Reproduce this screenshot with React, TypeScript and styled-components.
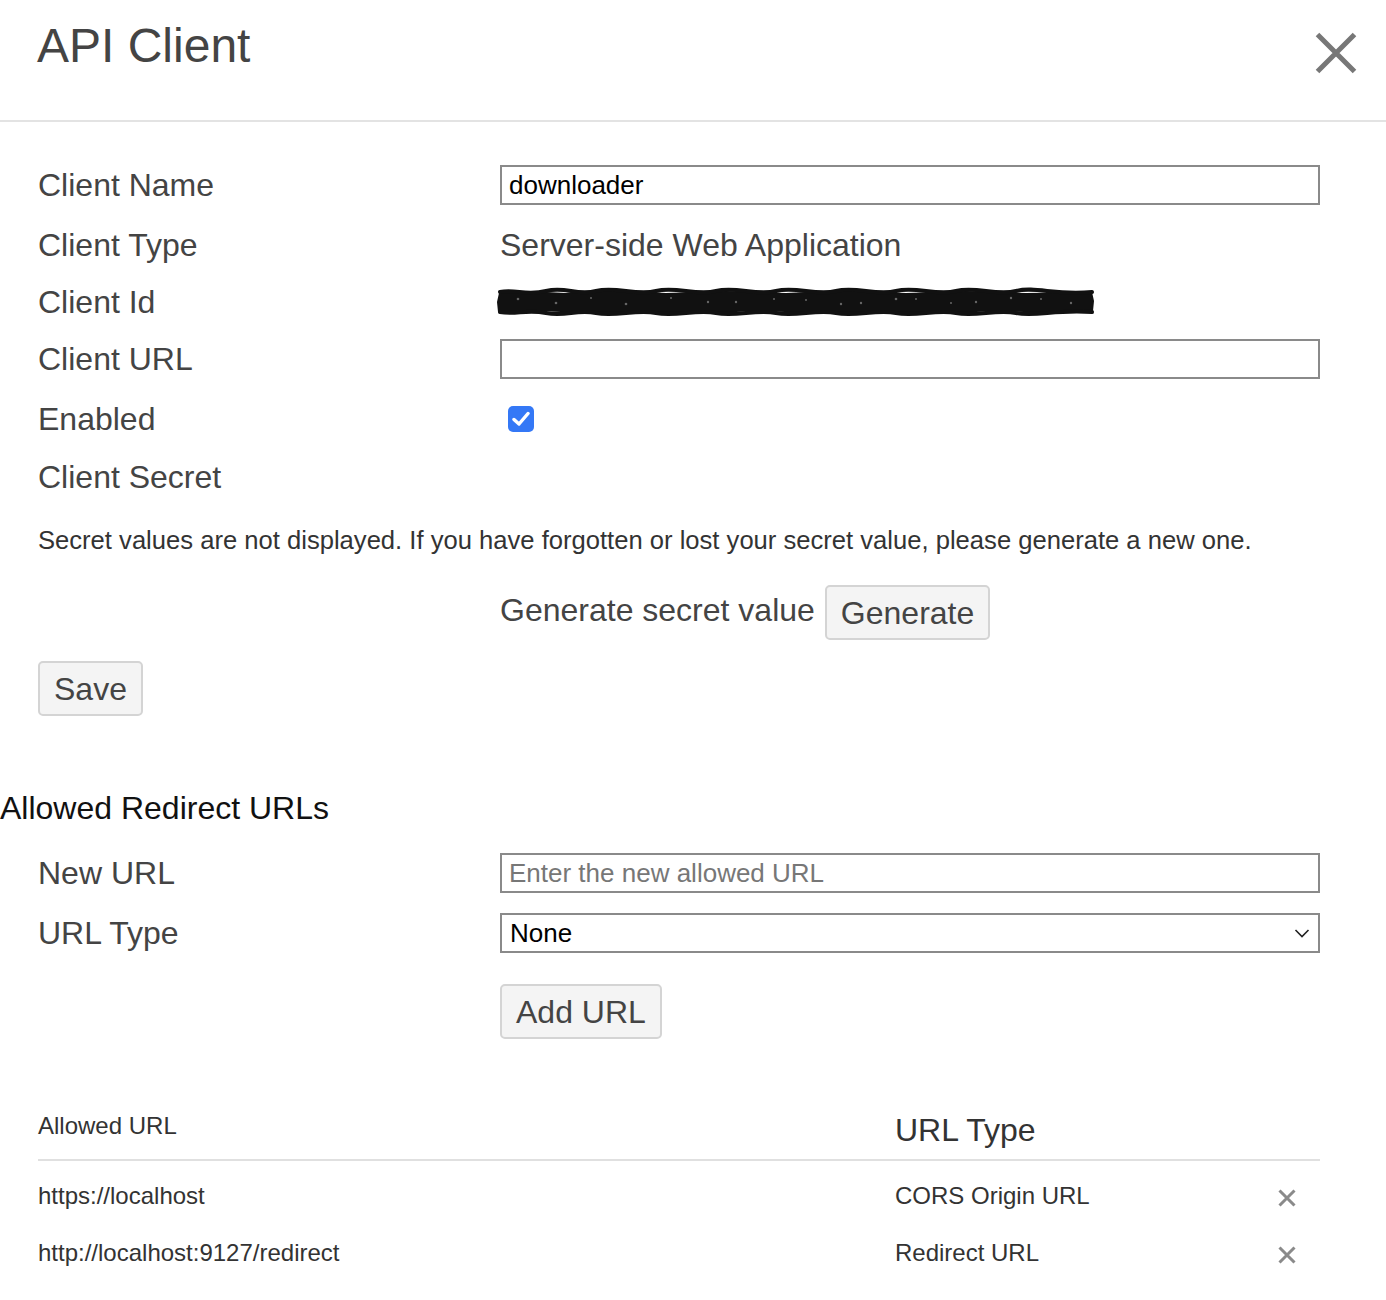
import React from "react";
import styled, { createGlobalStyle } from "styled-components";

const Global = createGlobalStyle`
  html, body { margin: 0; padding: 0; background: #fff; }
  body { font-family: "Liberation Sans", Arial, sans-serif; color: #444; }
  * { box-sizing: border-box; }
`;

const Page = styled.div`
  width: 1386px;
  min-height: 1300px;
  background: #fff;
`;

const Header = styled.header`
  display: flex;
  justify-content: space-between;
  align-items: flex-start;
  height: 122px;
  padding: 18px 29px 0 37px;
  border-bottom: 2px solid #e3e3e3;
`;

const Title = styled.h1`
  margin: 0;
  font-size: 48px;
  line-height: 56px;
  font-weight: 400;
  color: #444;
`;

const CloseButton = styled.button`
  width: 42px;
  height: 42px;
  margin-top: 14px;
  padding: 0;
  border: none;
  background: transparent;
  cursor: pointer;
  display: flex;
`;

const Body = styled.div`
  padding: 33px 66px 0 38px;
`;

const FormRow = styled.div<{ $h?: number }>`
  display: grid;
  grid-template-columns: 462px 1fr;
  align-items: center;
  height: ${(p) => p.$h ?? 58}px;
`;

const Label = styled.div`
  font-size: 32px;
  line-height: 40px;
  color: #444;
`;

const Value = styled.div`
  font-size: 32px;
  line-height: 40px;
  color: #444;
`;

const TextInput = styled.input`
  width: 100%;
  height: 40px;
  border: 2px solid #8a8a8a;
  padding: 0 7px;
  font-family: "Liberation Sans", Arial, sans-serif;
  font-size: 26px;
  color: #000;
  background: #fff;
  outline: none;
  &::placeholder { color: #777; }
`;

const SelectWrap = styled.div`
  position: relative;
  width: 100%;
`;

const Select = styled.select`
  width: 100%;
  height: 40px;
  border: 2px solid #8a8a8a;
  border-radius: 0;
  padding: 0 8px;
  font-family: "Liberation Sans", Arial, sans-serif;
  font-size: 26px;
  color: #000;
  background: #fff;
  appearance: none;
  outline: none;
`;

const Chevron = styled.svg`
  position: absolute;
  right: 10px;
  top: 13px;
  pointer-events: none;
`;

const Check = styled.div`
  width: 26px;
  height: 26px;
  margin-left: 8px;
  border-radius: 5px;
  background: #3478f6;
  display: flex;
  align-items: center;
  justify-content: center;
`;

const RedactionBox = styled.div`
  display: flex;
  margin-left: -4px;
`;

const Note = styled.p`
  margin: 19px 0 0;
  font-size: 25.6px;
  line-height: 32px;
  color: #333;
`;

const GenerateRow = styled.div`
  display: flex;
  align-items: center;
  gap: 10px;
  margin: 29px 0 0 462px;
`;

const GenerateLabel = styled(Value)`
  margin-top: -5px;
`;

const Button = styled.button<{ $mt?: number; $ml?: number }>`
  height: 55px;
  padding: 0 14px;
  margin-top: ${(p) => p.$mt ?? 0}px;
  margin-left: ${(p) => p.$ml ?? 0}px;
  border: 2px solid #d4d4d4;
  border-radius: 5px;
  background: #f4f4f4;
  color: #444;
  font-family: "Liberation Sans", Arial, sans-serif;
  font-size: 32px;
  line-height: 40px;
  cursor: pointer;
  display: block;
`;

const SectionTitle = styled.h2`
  margin: 72px 0 15px -38px;
  font-size: 32px;
  line-height: 40px;
  font-weight: 400;
  color: #111;
`;

const Table = styled.div`
  margin-top: 61px;
`;

const TableRow = styled.div<{ $h: number; $head?: boolean }>`
  display: grid;
  grid-template-columns: 857px 1fr 64px;
  align-items: center;
  height: ${(p) => p.$h}px;
  border-bottom: ${(p) => (p.$head ? "2px solid #e0e0e0" : "none")};
`;

const Cell = styled.div<{ $size?: number; $pb?: number }>`
  font-size: ${(p) => p.$size ?? 24}px;
  line-height: ${(p) => (p.$size ?? 24) + 8}px;
  padding-bottom: ${(p) => p.$pb ?? 0}px;
  color: #333;
`;

const TableBody = styled.div`
  padding-top: 6px;
`;

const DeleteButton = styled.button`
  width: 20px;
  height: 20px;
  padding: 0;
  margin: 6px 0 0 22px;
  border: none;
  background: transparent;
  display: flex;
  cursor: pointer;
`;

const Redaction = () => (
  <svg width="600" height="30" viewBox="0 0 600 30">
    <path
      d="M3 6 L30 4 L70 6 L120 3 L170 6 L230 4 L290 6 L350 3 L410 6 L470 4 L530 6 L596 5 L598 14 L597 24 L560 26 L500 24 L440 27 L380 25 L320 26 L260 24 L200 27 L140 25 L90 26 L40 24 L2 25 L1 15 Z"
      fill="#111"
    />
    <path
      d="M4 5 C20 2 30 9 50 4 S80 9 100 4 S140 9 160 4 S200 9 220 4 S260 9 280 4 S320 9 340 4 S380 9 400 4 S440 9 460 4 S500 9 520 4 S560 9 596 5"
      stroke="#111"
      strokeWidth="4"
      fill="none"
      strokeLinecap="round"
    />
    <path
      d="M4 25 C20 28 30 22 50 26 S80 22 100 26 S140 22 160 26 S200 22 220 26 S260 22 280 26 S320 22 340 26 S380 22 400 26 S440 22 460 26 S500 22 520 26 S560 22 596 25"
      stroke="#111"
      strokeWidth="4"
      fill="none"
      strokeLinecap="round"
    />
    <g fill="#8a8a8a" opacity="0.7">
      <circle cx="22" cy="12" r="1.3" />
      <circle cx="60" cy="16" r="1.3" />
      <circle cx="95" cy="11" r="1" />
      <circle cx="130" cy="17" r="1.3" />
      <circle cx="175" cy="11" r="1" />
      <circle cx="212" cy="15" r="1.2" />
      <circle cx="240" cy="15" r="1.2" />
      <circle cx="278" cy="12" r="1" />
      <circle cx="310" cy="13" r="1" />
      <circle cx="345" cy="17" r="1.2" />
      <circle cx="365" cy="16" r="1.2" />
      <circle cx="400" cy="12" r="1.3" />
      <circle cx="420" cy="12" r="1" />
      <circle cx="455" cy="16" r="1" />
      <circle cx="480" cy="15" r="1.2" />
      <circle cx="515" cy="11" r="1.2" />
      <circle cx="545" cy="12" r="1" />
      <circle cx="575" cy="16" r="1.2" />
    </g>
  </svg>
);

const XIcon = ({ size, stroke, color }: { size: number; stroke: number; color: string }) => (
  <svg width={size} height={size} viewBox={`0 0 ${size} ${size}`}>
    <path
      d={`M${stroke / 2} ${stroke / 2} L${size - stroke / 2} ${size - stroke / 2} M${size - stroke / 2} ${stroke / 2} L${stroke / 2} ${size - stroke / 2}`}
      stroke={color}
      strokeWidth={stroke}
    />
  </svg>
);

const rows = [
  { url: "https://localhost", type: "CORS Origin URL" },
  { url: "http://localhost:9127/redirect", type: "Redirect URL" },
];

export default function App() {
  return (
    <Page>
      <Global />
      <Header>
        <Title>API Client</Title>
        <CloseButton aria-label="Close">
          <XIcon size={42} stroke={5} color="#777" />
        </CloseButton>
      </Header>
      <Body>
        <FormRow $h={60}>
          <Label>Client Name</Label>
          <TextInput defaultValue="downloader" />
        </FormRow>
        <FormRow $h={60}>
          <Label>Client Type</Label>
          <Value>Server-side Web Application</Value>
        </FormRow>
        <FormRow $h={54}>
          <Label>Client Id</Label>
          <RedactionBox>
            <Redaction />
          </RedactionBox>
        </FormRow>
        <FormRow $h={60}>
          <Label>Client URL</Label>
          <TextInput defaultValue="" />
        </FormRow>
        <FormRow $h={60}>
          <Label>Enabled</Label>
          <Check>
            <svg width="18" height="16" viewBox="0 0 18 16">
              <path d="M2 8.5 L7 13 L16 2.5" stroke="#fff" strokeWidth="3.4" fill="none" strokeLinecap="round" strokeLinejoin="round" />
            </svg>
          </Check>
        </FormRow>
        <FormRow $h={56}>
          <Label>Client Secret</Label>
          <div />
        </FormRow>
        <Note>
          Secret values are not displayed. If you have forgotten or lost your secret value, please generate a new one.
        </Note>
        <GenerateRow>
          <GenerateLabel>Generate secret value</GenerateLabel>
          <Button>Generate</Button>
        </GenerateRow>
        <Button $mt={21}>Save</Button>

        <SectionTitle>Allowed Redirect URLs</SectionTitle>
        <FormRow $h={60}>
          <Label>New URL</Label>
          <TextInput placeholder="Enter the new allowed URL" />
        </FormRow>
        <FormRow $h={60}>
          <Label>URL Type</Label>
          <SelectWrap>
            <Select defaultValue="None">
              <option>None</option>
              <option>CORS Origin URL</option>
              <option>Redirect URL</option>
            </Select>
            <Chevron width="16" height="14" viewBox="0 0 16 14">
              <path d="M1.5 4 L8 10.5 L14.5 4" stroke="#222" strokeWidth="1.6" fill="none" />
            </Chevron>
          </SelectWrap>
        </FormRow>
        <Button $mt={21} $ml={462}>Add URL</Button>

        <Table>
          <TableRow $h={61} $head>
            <Cell $pb={8}>Allowed URL</Cell>
            <Cell $size={32}>URL Type</Cell>
            <div />
          </TableRow>
          <TableBody>
            {rows.map((r) => (
              <TableRow $h={57} key={r.url}>
                <Cell>{r.url}</Cell>
                <Cell>{r.type}</Cell>
                <DeleteButton aria-label="Remove">
                  <XIcon size={18} stroke={3} color="#8a8a8a" />
                </DeleteButton>
              </TableRow>
            ))}
          </TableBody>
        </Table>
      </Body>
    </Page>
  );
}
